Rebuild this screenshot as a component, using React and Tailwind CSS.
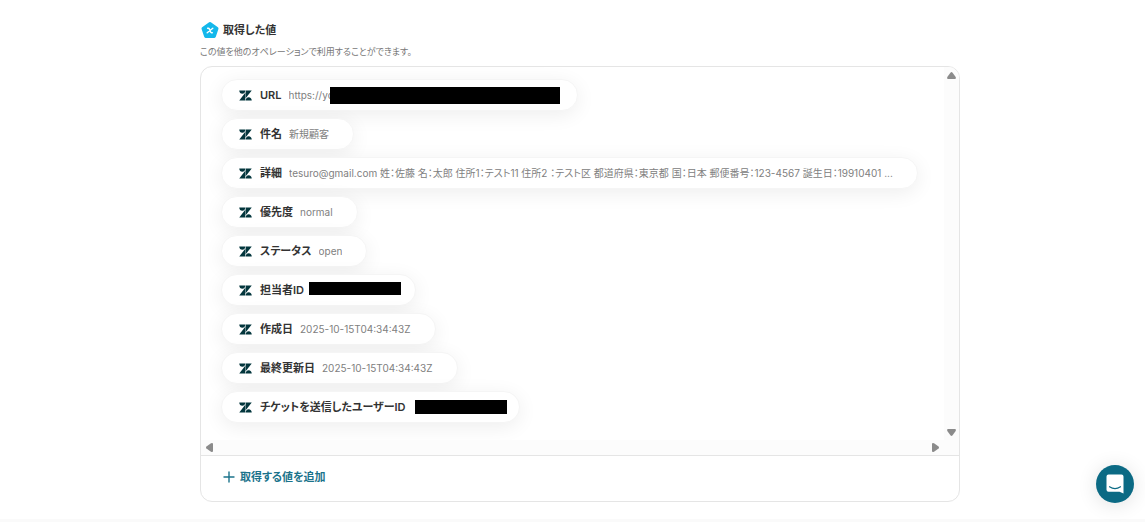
const rows = [
  { label: 'URL', value: 'https://yo', mask: 'w-[230px] h-[17px] -ml-[11px]', pad: 'pr-[17px]' },
  { label: '件名', value: '新規顧客', pad: 'pr-6' },
  {
    label: '詳細',
    value:
      'tesuro@gmail.com 姓：佐藤 名：太郎 住所1：テスト11 住所2 ：テスト区 都道府県：東京都 国：日本 郵便番号：123-4567 誕生日：19910401 ...',
    pad: 'pr-6',
  },
  { label: '優先度', value: 'normal', pad: 'pr-6' },
  { label: 'ステータス', value: 'open', pad: 'pr-6' },
  { label: '担当者ID', mask: 'w-[92px] h-[13px] -ml-0.5 mb-1', pad: 'pr-3.5' },
  { label: '作成日', value: '2025-10-15T04:34:43Z', pad: 'pr-6' },
  { label: '最終更新日', value: '2025-10-15T04:34:43Z', pad: 'pr-6' },
  { label: 'チケットを送信したユーザーID', mask: 'w-[92px] h-[14px] ml-0.5', pad: 'pr-3' },
];

function ZendeskMark() {
  return (
    <svg viewBox="0 0 26 22" className="mt-px mr-px h-[11px] w-[13px] shrink-0" fill="#03363d" aria-hidden="true">
      <path d="M13.300 1V16.500L25.500 1zM.5 1C.5 5 3.200 7.600 6.600 7.600S12.500 5 12.500 1zM12.500 5.500L.5 21H12.500zM19.400 14.400C16 14.400 13.300 17 13.300 21H25.500C25.500 17 22.800 14.400 19.400 14.400z" />
    </svg>
  );
}

function Arrow({ className }) {
  return (
    <svg viewBox="0 0 9 7" className={`h-[7px] w-[9px] ${className}`} fill="#8b8b8b" aria-hidden="true">
      <path d="M3.6 0.4Q4.5-.4 5.4.4L8.7 5Q9.3 7 8 7H1Q-.3 7 .3 5z" />
    </svg>
  );
}

function Chip({ label, value, mask, pad }) {
  return (
    <li
      className={`flex h-8 max-w-full items-center gap-[7px] rounded-full border border-[#f5f5f5] bg-white pl-[17px] whitespace-nowrap shadow-[0_4px_20px_rgba(0,0,0,0.07)] ${pad}`}
    >
      <ZendeskMark />
      <span className="text-[11px] leading-4 font-semibold text-[#333]">{label}</span>
      {value && <span className="truncate text-[10px] leading-4 text-[#808080]">{value}</span>}
      {mask && <span className={`shrink-0 bg-black ${mask}`} />}
    </li>
  );
}

export default function App() {
  return (
    <div className="flex min-h-screen flex-col bg-white font-['Inter','Noto_Sans_CJK_JP',sans-serif] [font-feature-settings:'palt']">
      <main className="w-full grow pt-5 pr-4 pl-[31px]">
        <div className="mx-auto w-full max-w-[760px]">
          <header>
            <div className="flex items-center gap-[3px]">
              <svg viewBox="0 0 20 20" className="size-5" aria-hidden="true">
                <path
                  d="M10 3.6 17 8.5 14.4 16.4H5.6L3 8.5z"
                  fill="#14b8eb"
                  stroke="#14b8eb"
                  strokeWidth="3"
                  strokeLinejoin="round"
                />
                <path
                  d="M7.600 8.200H8.400Q9 8.200 9.300 8.900L10.600 12.100Q10.900 12.800 11.500 12.800H12.300M12.800 8.200L7.200 12.800"
                  fill="none"
                  stroke="#fff"
                  strokeWidth="1.400"
                  strokeLinecap="round"
                />
              </svg>
              <h1 className="text-[11px] leading-5 font-semibold text-[#333]">取得した値</h1>
            </div>
            <p className="mt-1 text-[9px] leading-4 text-[#777]">
              この値を他のオペレーションで利用することができます。
            </p>
          </header>

          <section className="mt-1.5 overflow-hidden rounded-xl border border-[#e5e5e5]">
            <div className="grid grid-cols-[1fr_15px] grid-rows-[auto_15px] border-b border-[#e5e5e5]">
              <ul className="flex min-w-0 flex-col items-start gap-[7px] overflow-hidden px-5 pt-3 pb-[17px]">
                {rows.map((row) => (
                  <Chip key={row.label} {...row} />
                ))}
              </ul>
              <div className="flex flex-col items-center justify-between bg-[#fcfcfc] pt-[5px] pb-1">
                <Arrow className="" />
                <Arrow className="rotate-180" />
              </div>
              <div className="flex items-center justify-between bg-[#fcfcfc] px-1">
                <Arrow className="-rotate-90" />
                <Arrow className="rotate-90" />
              </div>
              <div className="bg-[#fcfcfc]" />
            </div>
            <button
              type="button"
              className="flex h-[45px] items-center gap-[5px] px-[22px] pb-1 text-[11px] leading-5 font-semibold text-[#1b738b]"
            >
              <svg viewBox="0 0 12 12" className="size-3" stroke="currentColor" strokeWidth="1.400" aria-hidden="true">
                <path d="M6 1v10M1 6h10" strokeLinecap="round" />
              </svg>
              取得する値を追加
            </button>
          </section>
        </div>
      </main>
      <footer className="h-[3px] bg-[#fafafa]" />

      <button
        type="button"
        aria-label="チャットを開く"
        className="fixed right-[11px] bottom-[19px] grid size-[38px] place-items-center rounded-full bg-[#0b6a84] shadow-[0_2px_20px_rgba(0,0,0,0.12)]"
      >
        <svg viewBox="0 0 18 20" className="h-5 w-[18px]" aria-hidden="true">
          <path
            d="M2.500.5h13A2 2 0 0 1 17.500 2.500V19.500L13.500 17.800H2.500A2 2 0 0 1 .5 15.800V2.500a2 2 0 0 1 2-2z"
            fill="#fff"
          />
          <path
            d="M3.500 12.700c3.300 2.300 7.700 2.300 11 0"
            fill="none"
            stroke="#0b6a84"
            strokeWidth="1.100"
            strokeLinecap="round"
          />
        </svg>
      </button>
    </div>
  );
}
